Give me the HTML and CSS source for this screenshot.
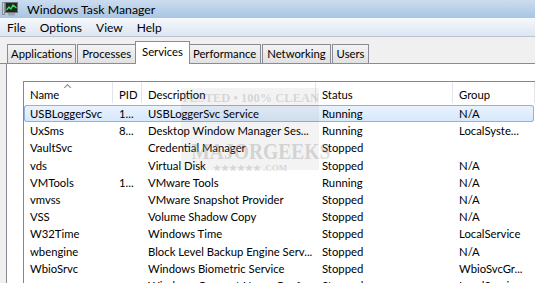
FILE: index.html
```html
<!DOCTYPE html>
<html lang="en">
<head>
  <meta charset="UTF-8">
  <title>Windows Task Manager</title>
  <link rel="stylesheet" href="styles.css">
</head>
<body>
  <!-- Title bar -->
  <div class="titlebar">
    <svg class="app-icon" width="16" height="14" viewBox="0 0 16 14">
      <rect x="0.5" y="0.5" width="2" height="12" fill="#c9cdd2" stroke="#8a9099"/>
      <rect x="3.5" y="0.5" width="12" height="10" fill="#1d2a1f" stroke="#6d747c"/>
      <polyline points="4.5,8 7,5 9,7 11,3 14.5,6" fill="none" stroke="#3fe05a" stroke-width="1.3"/>
      <rect x="6" y="11" width="7" height="2.5" fill="#9aa3ad"/>
    </svg>
    <span class="title-text">Windows Task Manager</span>
  </div>

  <!-- Menu bar -->
  <div class="menubar">
    <span>File</span>
    <span>Options</span>
    <span>View</span>
    <span>Help</span>
  </div>

  <!-- Tabs -->
  <div class="tabstrip">
    <div class="tab">Applications</div>
    <div class="tab">Processes</div>
    <div class="tab active">Services</div>
    <div class="tab">Performance</div>
    <div class="tab">Networking</div>
    <div class="tab">Users</div>
  </div>

  <div class="panel">
    <div class="listview">
      <div class="row header">
        <div class="cell sorted">Name</div>
        <div class="cell">PID</div>
        <div class="cell">Description</div>
        <div class="cell">Status</div>
        <div class="cell">Group</div>
      </div>
      <div class="row selected">
        <div class="cell">USBLoggerSvc</div><div class="cell">1...</div><div class="cell">USBLoggerSvc Service</div><div class="cell">Running</div><div class="cell">N/A</div>
      </div>
      <div class="row">
        <div class="cell">UxSms</div><div class="cell">8...</div><div class="cell">Desktop Window Manager Ses...</div><div class="cell">Running</div><div class="cell">LocalSyste...</div>
      </div>
      <div class="row">
        <div class="cell">VaultSvc</div><div class="cell"></div><div class="cell">Credential Manager</div><div class="cell">Stopped</div><div class="cell"></div>
      </div>
      <div class="row">
        <div class="cell">vds</div><div class="cell"></div><div class="cell">Virtual Disk</div><div class="cell">Stopped</div><div class="cell">N/A</div>
      </div>
      <div class="row">
        <div class="cell">VMTools</div><div class="cell">1...</div><div class="cell">VMware Tools</div><div class="cell">Running</div><div class="cell">N/A</div>
      </div>
      <div class="row">
        <div class="cell">vmvss</div><div class="cell"></div><div class="cell">VMware Snapshot Provider</div><div class="cell">Stopped</div><div class="cell">N/A</div>
      </div>
      <div class="row">
        <div class="cell">VSS</div><div class="cell"></div><div class="cell">Volume Shadow Copy</div><div class="cell">Stopped</div><div class="cell">N/A</div>
      </div>
      <div class="row">
        <div class="cell">W32Time</div><div class="cell"></div><div class="cell">Windows Time</div><div class="cell">Stopped</div><div class="cell">LocalService</div>
      </div>
      <div class="row">
        <div class="cell">wbengine</div><div class="cell"></div><div class="cell">Block Level Backup Engine Serv...</div><div class="cell">Stopped</div><div class="cell">N/A</div>
      </div>
      <div class="row">
        <div class="cell">WbioSrvc</div><div class="cell"></div><div class="cell">Windows Biometric Service</div><div class="cell">Stopped</div><div class="cell">WbioSvcGr...</div>
      </div>
      <div class="row">
        <div class="cell">wcncsvc</div><div class="cell"></div><div class="cell">Windows Connect Now - Conf...</div><div class="cell">Stopped</div><div class="cell">LocalService</div>
      </div>
    </div>

    <!-- watermark stamp over the list -->
    <div class="stamp">
      <div class="stamp-top">TESTED • 100% CLEAN</div>
      <div class="stamp-main">MAJORGEEKS</div>
      <div class="stamp-bottom">★★★★★★ .COM</div>
    </div>
  </div>
</body>
</html>
```

FILE: styles.css
```css
body {
  margin: 0;
  font-family: Lato, "Noto Sans", sans-serif;
  font-size: 11.3px;
  color: #000;
  background-color: #f0f0f0;
  overflow: hidden;
  height: 283px;
}

/* Title bar */
.titlebar {
  height: 18px;
  display: flex;
  align-items: center;
  padding-left: 2px;
  background: linear-gradient(#cbdcef, #a9c5e3);
}

.app-icon {
  margin-right: 9px;
}

.title-text {
  font-size: 12.3px;
}

/* Menu bar */
.menubar {
  height: 18px;
  display: flex;
  align-items: center;
  padding-left: 7px;
  font-size: 12px;
  background: linear-gradient(#f6f8fc, #dce6f2);
  border-bottom: 1px solid #b9c3ce;
}

.menubar span {
  margin-right: 14px;
}

/* Tabs */
.tabstrip {
  display: flex;
  align-items: flex-end;
  height: 26px;
  padding-left: 7px;
  border-bottom: 1px solid #898c95;
}

.tab {
  height: 18px;
  line-height: 18px;
  padding: 0 4px;
  margin-right: 1px;
  border: 1px solid #898c95;
  border-bottom: none;
  background: linear-gradient(#f3f3f3, #e1e1e1);
}

.tab:first-child {
  padding: 0 3px;
}

.tab.active {
  height: 22px;
  line-height: 20px;
  background: #fff;
  margin: 0 -2px -1px -2px;
  padding: 0 6px;
  position: relative;
  z-index: 1;
}

/* Panel */
.panel {
  position: relative;
  box-sizing: border-box;
  margin-left: 6px;
  height: 219px;
  overflow: hidden;
  background: #fff;
  border-left: 1px solid #898c95;
  padding: 17px 0 0 16px;
}

.listview {
  border-top: 1px solid #828790;
  border-left: 1px solid #828790;
}

.row {
  display: grid;
  grid-template-columns: 89px 29px 174px 137px 1fr;
  height: 17.2px;
  line-height: 17px;
  white-space: nowrap;
}

.cell {
  padding-left: 6px;
  overflow: hidden;
}

.row.header {
  height: 21px;
  line-height: 25px;
  margin-bottom: 2px;
}

.row.header .cell {
  border-right: 1px solid #e2e5ea;
  position: relative;
}

.cell.sorted::before {
  content: "";
  position: absolute;
  left: 41px;
  top: 3px;
  width: 4px;
  height: 4px;
  border-left: 1px solid #7a8796;
  border-top: 1px solid #7a8796;
  transform: rotate(45deg);
}

.row.selected {
  background: linear-gradient(#eaf3fd, #d6e8fb);
  box-shadow: inset 0 0 0 1px #8fb3dc;
  border-radius: 3px;
  margin-right: 1px;
}

/* Watermark */
.stamp {
  position: absolute;
  left: 174px;
  top: 24px;
  width: 138px;
  height: 82px;
  background: rgba(90, 90, 90, 0.07);
  font-family: "Liberation Serif", serif;
  font-weight: bold;
  text-align: center;
  color: rgba(140, 140, 140, 0.3);
}

.stamp-top {
  font-size: 12.5px;
  line-height: 16px;
  margin-top: 2px;
  white-space: nowrap;
}

.stamp-main {
  font-size: 23px;
  margin-top: 35px;
  line-height: 22px;
  color: rgba(160, 160, 160, 0.4);
  transform: scaleX(0.85);
}

.stamp-bottom {
  font-size: 9px;
  line-height: 10px;
  color: rgba(170, 170, 170, 0.4);
}
```
